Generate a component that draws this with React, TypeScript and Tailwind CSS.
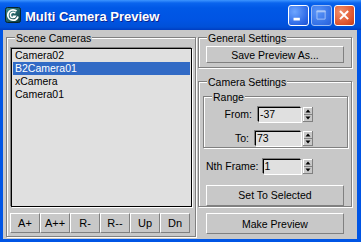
import React from "react";

const cameras = ["Camera02", "B2Camera01", "xCamera", "Camera01"];
const listButtons = ["A+", "A++", "R-", "R--", "Up", "Dn"];

function GroupBox({
  title,
  className,
  children,
}: {
  title: string;
  className: string;
  children?: React.ReactNode;
}) {
  return (
    <div
      className={`flex flex-col border border-[#808080] shadow-[inset_1px_1px_0_#fff,1px_1px_0_#fff] ${className}`}
    >
      <span className="-mt-[6px] ml-[8px] self-start bg-[#c8c8c8] px-[1px] leading-[12px]">
        {title}
      </span>
      {children}
    </div>
  );
}

function MaxButton({ label, className }: { label: string; className: string }) {
  return (
    <button
      type="button"
      className={`flex items-center justify-center border border-t-white border-l-white border-r-[#808080] border-b-[#808080] bg-[#c8c8c8] leading-[12px] ${className}`}
    >
      {label}
    </button>
  );
}

function SpinArrows() {
  return (
    <svg width="10" height="15" viewBox="0 0 10 15">
      <rect width="10" height="15" fill="#c8c8c8" />
      <path d="M0 0.5H9.5M0.5 0V14.5" stroke="#fff" />
      <path d="M0 14.5H10M9.5 0V15M1 7.5H9" stroke="#808080" />
      <path d="M2.5 5.5H7.5L5 2.5Z" fill="#000" />
      <path d="M2.5 9.5H7.5L5 12.5Z" fill="#000" />
    </svg>
  );
}

function SpinField({ value, width }: { value: string; width: string }) {
  return (
    <div className="flex items-center gap-[2px]">
      <div
        className={`h-[15px] ${width} border border-black border-r-[#e0e0e0] border-b-[#e0e0e0] bg-[#e0e0e0] pl-[1px] leading-[13px] shadow-[-1px_-1px_0_#808080,1px_1px_0_#fff]`}
      >
        {value}
      </div>
      <SpinArrows />
    </div>
  );
}

function TitleBar() {
  return (
    <div className="flex h-[30px] shrink-0 items-center bg-[linear-gradient(to_bottom,#3d95ff_0px,#0a64ee_3px,#0058e6_8px,#0054e3_20px,#0050d8_27px,#003dc0_30px)] pl-[5px] pr-[6px]">
      {/* 3ds max icon */}
      <svg width="16" height="16" viewBox="0 0 16 16">
        <defs>
          <linearGradient id="ic" x1="0" y1="0" x2="1" y2="1">
            <stop offset="0" stopColor="#3c8c8c" />
            <stop offset="1" stopColor="#0c3a40" />
          </linearGradient>
        </defs>
        <rect x="0.5" y="0.5" width="15" height="15" rx="2" fill="url(#ic)" stroke="#082428" />
        <path
          d="M11.5 4.2C10.6 3.3 9.4 2.8 8 2.8 5.1 2.8 2.8 5.1 2.8 8s2.3 5.2 5.2 5.2c2.4 0 4.4-1.6 5-3.8"
          fill="none"
          stroke="#fff"
          strokeWidth="1.8"
        />
        <path
          d="M10.4 6.2C9.8 5.6 9 5.3 8.1 5.3 6.6 5.3 5.4 6.5 5.4 8s1.2 2.6 2.7 2.6c1 0 1.9-.5 2.3-1.4H7.8"
          fill="none"
          stroke="#fff"
          strokeWidth="1.5"
        />
      </svg>
      <span className="ml-[4px] pt-[3px] font-bold text-[13px] leading-[15px] text-white [text-shadow:1px_1px_0_#0a2590]">
        Multi Camera Preview
      </span>
      <div className="ml-auto flex items-center">
        <div className="flex h-[21px] w-[21px] items-center justify-center rounded-[3px] border border-white bg-[radial-gradient(circle_at_30%_30%,#6ea6ff,#2c68e6_70%,#1d50d0)]">
          <svg width="21" height="21" viewBox="0 0 21 21">
            <rect x="5" y="13" width="7" height="3" fill="#fff" />
          </svg>
        </div>
        <div className="ml-[2px] flex h-[21px] w-[21px] items-center justify-center rounded-[3px] border border-[#9cbcf4] bg-[radial-gradient(circle_at_30%_30%,#5a95f8,#3470e6_70%,#2b60d8)]">
          <svg width="21" height="21" viewBox="0 0 21 21">
            <path d="M5.5 5.5h9v9h-9z" fill="none" stroke="#a9c6f7" />
            <path d="M5 5h10v2H5z" fill="#a9c6f7" />
          </svg>
        </div>
        <div className="ml-[2px] flex h-[21px] w-[21px] items-center justify-center rounded-[3px] border border-white bg-[radial-gradient(circle_at_30%_30%,#f0906c,#e0562f_65%,#c33c18)]">
          <svg width="21" height="21" viewBox="0 0 21 21">
            <path d="M5.5 5.5l9 9M14.5 5.5l-9 9" stroke="#fff" strokeWidth="2.2" />
          </svg>
        </div>
      </div>
    </div>
  );
}

export default function App() {
  return (
    <div className="flex h-[242px] w-[361px] flex-col bg-[#0055e5] font-['Liberation_Sans',Arial,sans-serif] text-[10.5px] text-black">
      <TitleBar />
      <div className="flex flex-1 pb-[3px] pl-[3px] pr-[4px]">
        <div className="flex flex-1 items-start bg-[#c8c8c8] pl-[3px] pt-[7px]">
          {/* Scene cameras */}
          <GroupBox title="Scene Cameras" className="h-[200px] w-[190px]">
            <div className="ml-[4px] mt-[4px] h-[159px] w-[181px] border border-black bg-[#e0e0e0] px-[1px] shadow-[-1px_-1px_0_#808080,1px_1px_0_#fff]">
              {cameras.map((c) => (
                <div
                  key={c}
                  className={
                    c === "B2Camera01"
                      ? "h-[13px] bg-[#316ac5] pl-[2px] leading-[13px] text-white"
                      : "h-[13px] pl-[2px] leading-[13px]"
                  }
                >
                  {c}
                </div>
              ))}
            </div>
            <div className="ml-[3px] mt-[6px] flex">
              {listButtons.map((b) => (
                <MaxButton key={b} label={b} className="h-[20px] w-[30px] text-[11px]" />
              ))}
            </div>
          </GroupBox>

          {/* Right column */}
          <div className="ml-[2px] flex w-[154px] flex-col">
            <GroupBox title="General Settings" className="h-[31px]">
              <MaxButton label="Save Preview As..." className="mt-[2px] h-[17px] w-[138px] self-center" />
            </GroupBox>

            <GroupBox title="Camera Settings" className="mt-[13px] h-[126px]">
              <GroupBox title="Range" className="ml-[4px] mt-[8px] h-[52px] w-[145px]">
                <div className="mt-[4px] flex items-center justify-end pr-[34px]">
                  <span className="mr-[6px]">From:</span>
                  <SpinField value="-37" width="w-[43px]" />
                </div>
                <div className="mt-[8px] flex items-center justify-end pr-[34px]">
                  <span className="mr-[6px]">To:</span>
                  <SpinField value="73" width="w-[46px]" />
                </div>
              </GroupBox>
              <div className="mt-[11px] flex items-center pl-[7px]">
                <span className="mr-[4px]">Nth Frame:</span>
                <SpinField value="1" width="w-[38px]" />
              </div>
              <MaxButton label="Set To Selected" className="mt-[10px] h-[21px] w-[138px] self-center" />
            </GroupBox>

            <MaxButton label="Make Preview" className="ml-[8px] mt-[6px] h-[21px] w-[138px]" />
          </div>
        </div>
      </div>
    </div>
  );
}
